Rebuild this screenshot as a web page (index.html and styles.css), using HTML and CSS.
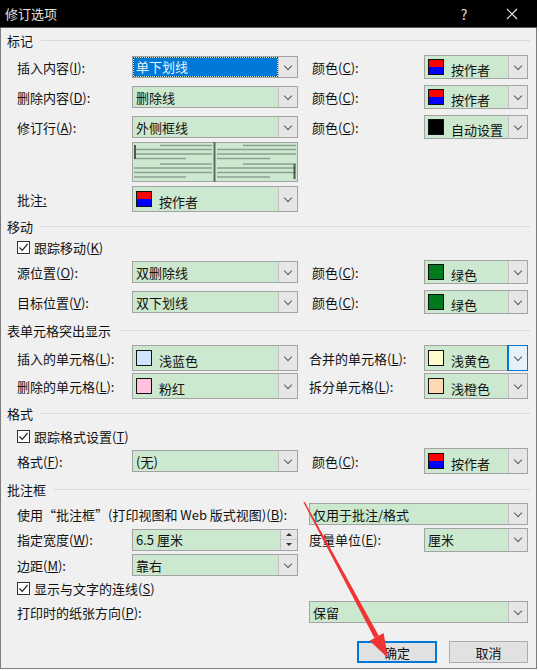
FILE: index.html
```html
<!DOCTYPE html>
<html lang="zh-CN">

<head>
    <meta charset="UTF-8">
    <title>修订选项</title>
    <link rel="stylesheet" href="styles.css">
</head>

<body>
    <div class="dialog">
        <div class="titlebar">
            <span class="title">修订选项</span>
            <span class="help">?</span>
            <span class="close">
                <svg width="12" height="12" viewBox="0 0 12 12">
                    <path d="M1 1 L11 11 M11 1 L1 11" stroke="#e6e6e6" stroke-width="1.2" />
                </svg>
            </span>
        </div>

        <div class="content">
            <!-- 标记 -->
            <section class="group">
                <div class="legend">标记</div>
                <div class="row">
                    <label class="label">插入内容(<u>I</u>):</label>
                    <div class="combo">
                        <span class="value selected">单下划线</span>
                        <span class="drop"></span>
                    </div>
                    <label class="label2">颜色(<u>C</u>):</label>
                    <div class="combo color">
                        <i class="swatch split"></i>
                        <span class="value">按作者</span>
                        <span class="drop"></span>
                    </div>
                </div>
                <div class="row">
                    <label class="label">删除内容(<u>D</u>):</label>
                    <div class="combo">
                        <span class="value">删除线</span>
                        <span class="drop"></span>
                    </div>
                    <label class="label2">颜色(<u>C</u>):</label>
                    <div class="combo color">
                        <i class="swatch split"></i>
                        <span class="value">按作者</span>
                        <span class="drop"></span>
                    </div>
                </div>
                <div class="row">
                    <label class="label">修订行(<u>A</u>):</label>
                    <div class="combo">
                        <span class="value">外侧框线</span>
                        <span class="drop"></span>
                    </div>
                    <label class="label2">颜色(<u>C</u>):</label>
                    <div class="combo color">
                        <i class="swatch black"></i>
                        <span class="value">自动设置</span>
                        <span class="drop"></span>
                    </div>
                </div>
                <div class="row preview-row">
                    <span class="label"></span>
                    <div class="preview">
                        <svg width="166" height="40" viewBox="0 0 166 40">
                            <g stroke="#8d9f90" stroke-width="1.6">
                                <path d="M28 3.5 H80 M2 7.5 H80 M2 12 H80 M2 16.5 H54" />
                                <path d="M28 22 H80 M2 26 H80 M2 30.5 H80 M2 35 H54" />
                                <path d="M111 3.5 H164 M85 7.5 H164 M85 12 H164 M85 16.5 H138" />
                                <path d="M111 22 H164 M85 26 H164 M85 30.5 H164 M85 35 H138" />
                            </g>
                            <path d="M82.5 0 V40" stroke="#5c6a5e" stroke-width="2" />
                            <path d="M3 3 V17" stroke="#4c584e" stroke-width="2" />
                            <path d="M162.5 22 V37" stroke="#4c584e" stroke-width="2" />
                        </svg>
                    </div>
                </div>
                <div class="row">
                    <label class="label">批注<u>:</u></label>
                    <div class="combo tall">
                        <i class="swatch split"></i>
                        <span class="value">按作者</span>
                        <span class="drop"></span>
                    </div>
                </div>
            </section>

            <!-- 移动 -->
            <section class="group">
                <div class="legend">移动</div>
                <div class="check h18">
                    <span class="box"><svg width="11" height="11" viewBox="0 0 11 11"><path d="M1.5 5.5 L4.3 8.3 L9.5 2" fill="none" stroke="#222" stroke-width="1.2" /></svg></span>
                    <span>跟踪移动(<u>K</u>)</span>
                </div>
                <div class="row h32">
                    <label class="label">源位置(<u>O</u>):</label>
                    <div class="combo">
                        <span class="value">双删除线</span>
                        <span class="drop"></span>
                    </div>
                    <label class="label2">颜色(<u>C</u>):</label>
                    <div class="combo color">
                        <i class="swatch green"></i>
                        <span class="value">绿色</span>
                        <span class="drop"></span>
                    </div>
                </div>
                <div class="row h28">
                    <label class="label">目标位置(<u>V</u>):</label>
                    <div class="combo">
                        <span class="value">双下划线</span>
                        <span class="drop"></span>
                    </div>
                    <label class="label2">颜色(<u>C</u>):</label>
                    <div class="combo color">
                        <i class="swatch green"></i>
                        <span class="value">绿色</span>
                        <span class="drop"></span>
                    </div>
                </div>
            </section>

            <!-- 表单元格突出显示 -->
            <section class="group">
                <div class="legend h28">表单元格突出显示</div>
                <div class="row h28">
                    <label class="label">插入的单元格(<u>L</u>):</label>
                    <div class="combo tall">
                        <i class="swatch light-blue"></i>
                        <span class="value">浅蓝色</span>
                        <span class="drop"></span>
                    </div>
                    <label class="label2 near">合并的单元格(<u>L</u>):</label>
                    <div class="combo color tall">
                        <i class="swatch light-yellow"></i>
                        <span class="value">浅黄色</span>
                        <span class="drop focus"></span>
                    </div>
                </div>
                <div class="row h28">
                    <label class="label">删除的单元格(<u>L</u>):</label>
                    <div class="combo tall">
                        <i class="swatch pink"></i>
                        <span class="value">粉红</span>
                        <span class="drop"></span>
                    </div>
                    <label class="label2 near">拆分单元格(<u>L</u>):</label>
                    <div class="combo color tall">
                        <i class="swatch peach"></i>
                        <span class="value">浅橙色</span>
                        <span class="drop"></span>
                    </div>
                </div>
            </section>

            <!-- 格式 -->
            <section class="group">
                <div class="legend h26">格式</div>
                <div class="check h20">
                    <span class="box"><svg width="11" height="11" viewBox="0 0 11 11"><path d="M1.5 5.5 L4.3 8.3 L9.5 2" fill="none" stroke="#222" stroke-width="1.2" /></svg></span>
                    <span>跟踪格式设置(<u>T</u>)</span>
                </div>
                <div class="row">
                    <label class="label">格式(<u>F</u>):</label>
                    <div class="combo">
                        <span class="value">(无)</span>
                        <span class="drop"></span>
                    </div>
                    <label class="label2">颜色(<u>C</u>):</label>
                    <div class="combo color tall">
                        <i class="swatch split"></i>
                        <span class="value">按作者</span>
                        <span class="drop"></span>
                    </div>
                </div>
            </section>

            <!-- 批注框 -->
            <section class="group">
                <div class="legend h26">批注框</div>
                <div class="row h24">
                    <label class="label wide">使用“批注框”(打印视图和 Web 版式视图)(<u>B</u>):</label>
                    <div class="combo long">
                        <span class="value">仅用于批注/格式</span>
                        <span class="drop"></span>
                    </div>
                </div>
                <div class="row h27">
                    <label class="label">指定宽度(<u>W</u>):</label>
                    <div class="combo spin">
                        <span class="value">6.5 厘米</span>
                        <span class="spinner">
                            <span class="up"></span>
                            <span class="down"></span>
                        </span>
                    </div>
                    <label class="label2 near">度量单位(<u>E</u>):</label>
                    <div class="combo color">
                        <span class="value">厘米</span>
                        <span class="drop"></span>
                    </div>
                </div>
                <div class="row h24">
                    <label class="label">边距(<u>M</u>):</label>
                    <div class="combo">
                        <span class="value">靠右</span>
                        <span class="drop"></span>
                    </div>
                </div>
                <div class="check h22">
                    <span class="box"><svg width="11" height="11" viewBox="0 0 11 11"><path d="M1.5 5.5 L4.3 8.3 L9.5 2" fill="none" stroke="#222" stroke-width="1.2" /></svg></span>
                    <span>显示与文字的连线(<u>S</u>)</span>
                </div>
                <div class="row h26">
                    <label class="label wide">打印时的纸张方向(<u>P</u>):</label>
                    <div class="combo long">
                        <span class="value">保留</span>
                        <span class="drop"></span>
                    </div>
                </div>
            </section>

            <div class="footer">
                <button class="btn default">确定</button>
                <button class="btn">取消</button>
            </div>
        </div>
    </div>

    <svg class="arrow" width="539" height="671" viewBox="0 0 539 671">
        <polygon points="303.4,502.3 304.6,501.7 378.8,635.7 374.4,638.1" fill="#f03434" />
        <polygon points="369.6,640.7 383.6,633.1 388,658" fill="#f03434" />
    </svg>
</body>

</html>
```

FILE: styles.css
```css
* {
    box-sizing: border-box;
}

body {
    margin: 0;
    background: #fff;
    font-family: "Noto Sans CJK SC", "Microsoft YaHei", sans-serif;
    font-size: 13px;
    color: #111;
}

u {
    text-underline-offset: 1px;
}

.dialog {
    width: 537px;
    height: 669px;
    background: #f0f0f0;
    border: 1px solid #7d7d7d;
    border-top: 0;
}

.titlebar {
    display: flex;
    align-items: center;
    height: 28px;
    margin: 0 -1px;
    padding-left: 5px;
    background: #000;
    color: #e2e2e2;
    border-bottom: 1px solid #5a5a5a;

    .title {
        flex: 1;
    }

    .help {
        width: 46px;
        text-align: center;
        font-size: 14px;
    }

    .close {
        display: grid;
        place-items: center;
        width: 50px;
    }
}

.content {
    padding: 0 6px 0 6px;
}

.legend {
    display: flex;
    align-items: center;
    gap: 8px;
    height: 24px;

    &::after {
        content: "";
        flex: 1;
        border-top: 1px solid #dadada;
    }
}

.row {
    display: flex;
    align-items: center;
    height: 30px;
    padding-left: 10px;
}

.h18 { height: 18px; }
.h20 { height: 20px; }
.h22 { height: 22px; }
.h24 { height: 24px; }
.h26 { height: 26px; }
.h27 { height: 27px; }
.h28 { height: 28px; }
.h32 { height: 32px; }

.label {
    width: 115px;
    white-space: nowrap;

    &.wide {
        width: 292px;
    }
}

.label2 {
    width: 112px;
    margin-left: 14px;
    white-space: nowrap;

    &.near {
        width: 115px;
        margin-left: 11px;
    }
}

.combo {
    display: flex;
    align-items: center;
    width: 166px;
    height: 22px;
    border: 1px solid #a3a3a3;
    background: #cce8cf;

    &.tall {
        height: 26px;
    }

    &.color {
        width: 104px;
        height: 24px;
    }

    &.color.tall {
        height: 26px;
    }

    &.long {
        width: 219px;
    }

    .value {
        padding-left: 3px;
        white-space: nowrap;
    }

    .value.selected {
        flex: 1;
        align-self: stretch;
        margin: 1px;
        padding-left: 2px;
        line-height: 18px;
        background: #0078d7;
        color: #eaf3ff;
        outline: 1px dotted #3a3a3a;
    }

    .swatch + .value {
        padding-left: 7px;
        padding-top: 5px;
    }
}

.swatch {
    flex: none;
    width: 16px;
    height: 16px;
    margin-left: 3px;
    border: 1px solid #111;

    &.split {
        background: linear-gradient(#f00 50%, #00f 50%);
    }

    &.black { background: #000; }
    &.green { background: #007a1c; }
    &.light-blue { background: #cfe4fd; }
    &.pink { background: #ffc1dd; }
    &.light-yellow { background: #fdfcca; }
    &.peach { background: #ffd8b4; }
}

.drop {
    display: grid;
    place-items: center;
    align-self: stretch;
    width: 19px;
    margin-left: auto;
    background: #e6e6e6;
    border-left: 1px solid #c2c2c2;

    &::after {
        content: "";
        width: 5px;
        height: 5px;
        margin-top: -3px;
        border: solid #5a5a5a;
        border-width: 0 1px 1px 0;
        transform: rotate(45deg);
    }

    &.focus {
        background: #e5f1fb;
        outline: 1px solid #0078d7;
        border-left-color: #0078d7;
    }
}

.spinner {
    display: flex;
    flex-direction: column;
    align-self: stretch;
    width: 17px;
    margin-left: auto;
    border-left: 1px solid #c2c2c2;
    background: #e6e6e6;

    span {
        flex: 1;
        display: grid;
        place-items: center;
    }

    .up {
        border-bottom: 1px solid #c8c8c8;
    }

    .up::after,
    .down::after {
        content: "";
        border: 3px solid transparent;
    }

    .up::after {
        border-bottom: 3px solid #333;
        margin-top: -3px;
    }

    .down::after {
        border-top: 3px solid #333;
        margin-bottom: -3px;
    }
}

.preview-row {
    align-items: flex-start;
    height: 42px;
}

.preview {
    width: 166px;
    height: 40px;
    border: 1px solid #a3a3a3;
    background: #cce8cf;

    svg {
        display: block;
        margin: -1px;
    }
}

.check {
    display: flex;
    align-items: center;
    gap: 4px;
    padding-left: 10px;

    .box {
        display: grid;
        place-items: center;
        width: 13px;
        height: 13px;
        border: 1px solid #333;
        background: #fff;
    }
}

.footer {
    display: flex;
    justify-content: flex-end;
    gap: 12px;
    padding: 16px 2px 0 0;
}

.btn {
    width: 79px;
    height: 22px;
    padding: 0;
    font: inherit;
    color: #111;
    background: #e1e1e1;
    border: 1px solid #adadad;

    &.default {
        width: 80px;
        border: 2px solid #0078d7;
    }
}

.arrow {
    position: absolute;
    top: 0;
    left: 0;
    pointer-events: none;
}
```
